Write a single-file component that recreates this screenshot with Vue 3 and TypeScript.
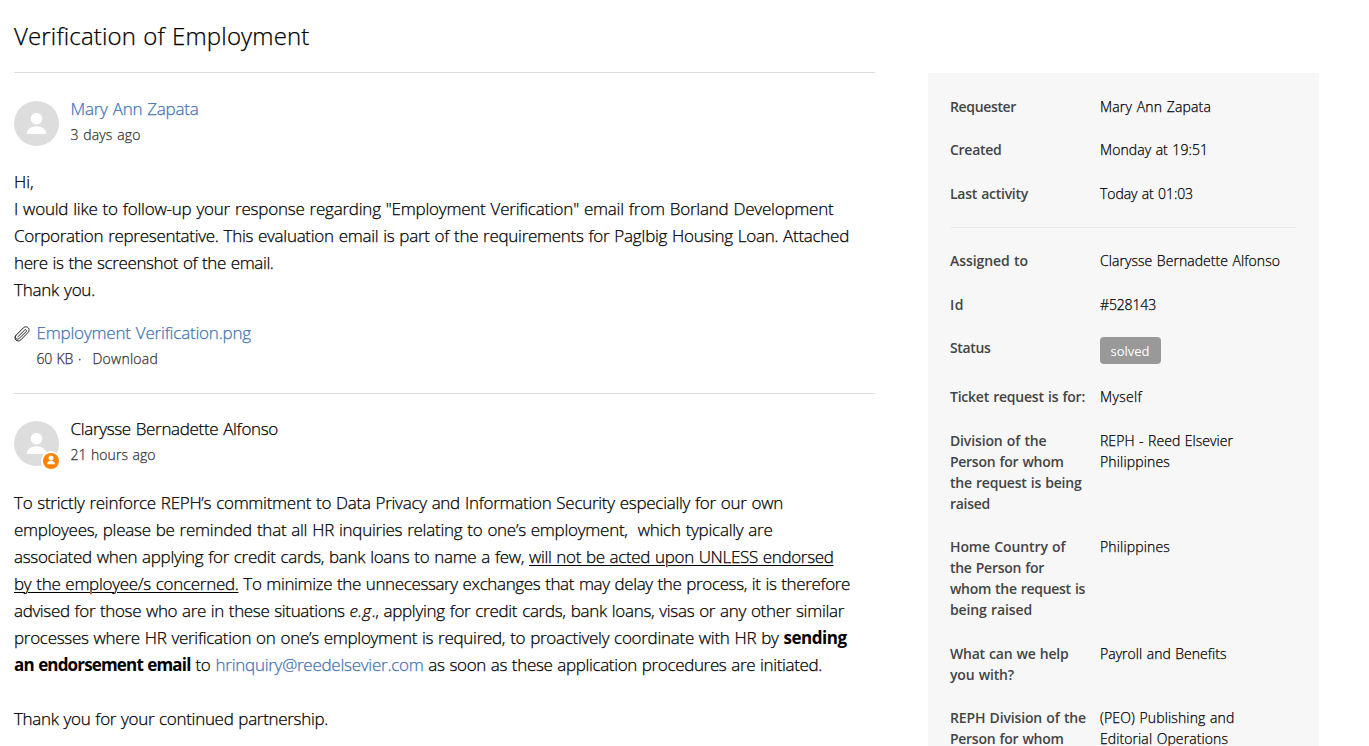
<script setup lang="ts">
import type { Directive } from 'vue'

interface Segment {
  text: string
  width: number
  kind?: 'link' | 'underline' | 'bold' | 'italic'
}
type Line = Segment[]
interface Field {
  label: Segment[]
  value: Segment[]
  badge?: boolean
}

// Tracks each run of text so that it occupies its intended measure.
const vMeasure: Directive<HTMLElement, number> = {
  mounted(el, { value }) {
    const natural = el.getBoundingClientRect().width
    const count = (el.textContent ?? '').length
    el.style.letterSpacing = `${(value - natural) / count}px`
  },
}

const request: Line[] = [
  [{ text: 'Hi,', width: 19.5 }],
  [{ text: 'I would like to follow-up your response regarding "Employment Verification" email from Borland Development', width: 819.5 }],
  [{ text: 'Corporation representative. This evaluation email is part of the requirements for PagIbig Housing Loan. Attached', width: 835 }],
  [{ text: 'here is the screenshot of the email.', width: 259.5 }],
  [{ text: 'Thank you.', width: 81 }],
]

const reply: Line[] = [
  [{ text: 'To strictly reinforce REPH’s commitment to Data Privacy and Information Security especially for our own', width: 769 }],
  [{ text: 'employees, please be reminded that all HR inquiries relating to one’s employment,\u00a0 which typically are', width: 758.5 }],
  [
    { text: 'associated when applying for credit cards, bank loans to name a few, ', width: 515 },
    { text: 'will not be acted upon UNLESS endorsed', width: 304.5, kind: 'underline' },
  ],
  [
    { text: 'by the employee/s concerned.', width: 224.5, kind: 'underline' },
    { text: ' To minimize the unnecessary exchanges that may delay the process, it is therefore', width: 611.5 },
  ],
  [
    { text: 'advised for those who are in these situations ', width: 335.5 },
    { text: 'e.g', width: 22, kind: 'italic' },
    { text: '., applying for credit cards, bank loans, visas or any other similar', width: 472.5 },
  ],
  [
    { text: 'processes where HR verification on one’s employment is required, to proactively coordinate with HR by ', width: 769.5 },
    { text: 'sending', width: 63, kind: 'bold' },
  ],
  [
    { text: 'an endorsement email', width: 176.5, kind: 'bold' },
    { text: ' to ', width: 25 },
    { text: 'hrinquiry@reedelsevier.com', width: 208, kind: 'link' },
    { text: ' as soon as these application procedures are initiated.', width: 398.5 },
  ],
  [{ text: '\u00a0', width: 5 }],
  [{ text: 'Thank you for your continued partnership.', width: 314 }],
]

const activity: Field[] = [
  { label: [{ text: 'Requester', width: 66 }], value: [{ text: 'Mary Ann Zapata', width: 111 }] },
  { label: [{ text: 'Created', width: 51.5 }], value: [{ text: 'Monday at 19:51', width: 108 }] },
  { label: [{ text: 'Last activity', width: 78 }], value: [{ text: 'Today at 01:03', width: 93 }] },
]

const details: Field[] = [
  { label: [{ text: 'Assigned to', width: 78 }], value: [{ text: 'Clarysse Bernadette Alfonso', width: 180 }] },
  { label: [{ text: 'Id', width: 14 }], value: [{ text: '#528143', width: 56 }] },
  { label: [{ text: 'Status', width: 40.5 }], value: [{ text: 'solved', width: 39 }], badge: true },
  { label: [{ text: 'Ticket request is for:', width: 135 }], value: [{ text: 'Myself', width: 42 }] },
  {
    label: [
      { text: 'Division of the', width: 96.5 },
      { text: 'Person for whom', width: 113.5 },
      { text: 'the request is being', width: 131.5 },
      { text: 'raised', width: 40 },
    ],
    value: [{ text: 'REPH - Reed Elsevier', width: 133 }, { text: 'Philippines', width: 70 }],
  },
  {
    label: [
      { text: 'Home Country of', width: 115.5 },
      { text: 'the Person for', width: 94 },
      { text: 'whom the request is', width: 135 },
      { text: 'being raised', width: 82 },
    ],
    value: [{ text: 'Philippines', width: 70 }],
  },
  {
    label: [{ text: 'What can we help', width: 118.5 }, { text: 'you with?', width: 64 }],
    value: [{ text: 'Payroll and Benefits', width: 126.5 }],
  },
  {
    label: [{ text: 'REPH Division of the', width: 136 }, { text: 'Person for whom', width: 113.5 }],
    value: [{ text: '(PEO) Publishing and', width: 134.5 }, { text: 'Editorial Operations', width: 128 }],
  },
]

const groups: Field[][] = [activity, details]
</script>

<template>
  <div class="page">
    <main class="thread">
      <h1><span v-measure="295.5">Verification of Employment</span></h1>

      <article class="comment">
        <header class="author">
          <svg class="avatar" viewBox="0 0 45 45">
            <circle cx="22.5" cy="22.5" r="22.5" fill="#ddd" />
            <circle cx="22.5" cy="17.6" r="5.8" fill="#fff" />
            <path d="M12.6 33C12.9 28.2 17 25.3 22.5 25.3S32.1 28.2 32.4 33Z" fill="#fff" />
          </svg>
          <div class="who">
            <div class="name link"><span v-measure="128">Mary Ann Zapata</span></div>
            <div class="meta"><span v-measure="70">3 days ago</span></div>
          </div>
        </header>
        <div class="body">
          <div v-for="(line, i) in request" :key="i" class="line">
            <span v-for="(s, j) in line" :key="j" v-measure="s.width" :class="s.kind">{{ s.text }}</span>
          </div>
        </div>
        <div class="attachment">
          <svg class="clip" viewBox="0 0 16 16" fill="none" stroke="#222" stroke-width="1" stroke-linecap="round">
            <path d="M3.9 10.8 10.5 4.2C11.8 2.9 13.3 4.4 12 5.7L5.3 12.4C3 14.7-.1 11.6 2.1 9.2L9.2 2C12.6-1.2 17.2 3 14.1 6.4L7 13.7C3.5 17.1-1.1 12.9 1.7 9.6" />
          </svg>
          <div>
            <div class="name link"><span v-measure="214.5">Employment Verification.png</span></div>
            <div class="meta file"><span v-measure="36.5">60 KB</span><span class="dot">·</span><span v-measure="65.5">Download</span></div>
          </div>
        </div>
      </article>

      <article class="comment">
        <header class="author">
          <div class="portrait">
            <svg class="avatar" viewBox="0 0 45 45">
              <circle cx="22.5" cy="22.5" r="22.5" fill="#ddd" />
              <circle cx="22.5" cy="17.6" r="5.8" fill="#fff" />
              <path d="M12.6 33C12.9 28.2 17 25.3 22.5 25.3S32.1 28.2 32.4 33Z" fill="#fff" />
            </svg>
            <svg class="agent" viewBox="0 0 20 20">
              <circle cx="10" cy="10" r="10" fill="#fff" />
              <circle cx="10" cy="10" r="8" fill="#ff8200" />
              <circle cx="10" cy="7.1" r="2.5" fill="#fff" />
              <path d="M6 13.3C6.2 11 7.8 9.8 10 9.8S13.8 11 14 13.3Z" fill="#fff" />
            </svg>
          </div>
          <div class="who">
            <div class="name"><span v-measure="207.5">Clarysse Bernadette Alfonso</span></div>
            <div class="meta"><span v-measure="85">21 hours ago</span></div>
          </div>
        </header>
        <div class="body">
          <div v-for="(line, i) in reply" :key="i" class="line">
            <span v-for="(s, j) in line" :key="j" v-measure="s.width" :class="s.kind">{{ s.text }}</span>
          </div>
        </div>
      </article>
    </main>

    <aside class="sidebar">
      <dl v-for="(group, g) in groups" :key="g">
        <div v-for="(field, f) in group" :key="f" class="field">
          <dt><div v-for="(s, i) in field.label" :key="i"><span v-measure="s.width">{{ s.text }}</span></div></dt>
          <dd :class="{ badge: field.badge }"><div v-for="(s, i) in field.value" :key="i"><span v-measure="s.width">{{ s.text }}</span></div></dd>
        </div>
      </dl>
    </aside>
  </div>
</template>

<style>
html,
body {
  background: #fff;
  overflow: hidden;
}
</style>

<style scoped>
.page {
  box-sizing: border-box;
  display: flex;
  justify-content: space-between;
  width: 1369px;
  height: 746px;
  padding: 0 50px 0 14px;
  overflow: hidden;
  color: #000;
  font-family: 'Open Sans', 'Noto Sans', sans-serif;
  font-weight: 300;
  -webkit-text-stroke: 0.25px currentColor;
  word-spacing: 0.8px;
  white-space: pre;
}
.thread {
  width: 861px;
}
h1 {
  height: 72px;
  margin: 0;
  font-size: 24px;
  font-weight: 300;
  line-height: 72px;
}
.comment {
  border-top: 1px solid #ddd;
  height: 320px;
}
.author {
  display: flex;
  gap: 11.5px;
  padding-top: 28px;
}
.comment + .comment .author {
  padding-top: 27px;
}
.portrait {
  position: relative;
  width: 45px;
  height: 45px;
}
.avatar {
  display: block;
  width: 45px;
  height: 45px;
}
.agent {
  position: absolute;
  left: 27px;
  top: 30px;
  width: 20px;
  height: 20px;
}
.who {
  margin-top: -5px;
}
.name {
  font-size: 17px;
  line-height: 26px;
}
.meta {
  color: #333;
  font-size: 14px;
  line-height: 25px;
}
.link {
  color: #3f74b5;
}
.body {
  margin-top: 21px;
  font-size: 17px;
  line-height: 27px;
}
.comment + .comment .body {
  margin-top: 22px;
}
.underline {
  text-decoration: underline;
  text-decoration-thickness: 1px;
  text-underline-offset: 2px;
}
.bold {
  font-weight: 700;
  -webkit-text-stroke: 0;
}
.italic {
  font-style: italic;
}
.attachment {
  display: flex;
  gap: 6.5px;
  margin-top: 17px;
}
.clip {
  width: 16px;
  height: 16px;
  margin-top: 6px;
}
.file {
  display: flex;
}
.dot {
  width: 19.5px;
  text-indent: 5px;
}
.sidebar {
  box-sizing: border-box;
  width: 391px;
  height: 700px;
  margin-top: 73px;
  padding: 22.9px 23px 0 22px;
  background: #f7f7f7;
  font-size: 14px;
  line-height: 21px;
}
dl {
  display: flex;
  flex-direction: column;
  gap: 22.5px;
  margin: 0;
}
dl + dl {
  margin-top: 23px;
  padding-top: 22.2px;
  border-top: 1px solid #eaeaea;
}
.field {
  display: flex;
  align-items: flex-start;
}
dt {
  width: 150px;
  color: #444;
  font-weight: 600;
  -webkit-text-stroke: 0;
}
dd {
  margin: 0;
}
.badge {
  box-sizing: border-box;
  width: 61px;
  height: 27px;
  margin-bottom: -0.5px;
  padding-left: 10.5px;
  border-radius: 4px;
  background: #999;
  color: #fff;
  font-size: 13px;
  font-weight: 400;
  line-height: 28px;
  -webkit-text-stroke: 0;
}
</style>
